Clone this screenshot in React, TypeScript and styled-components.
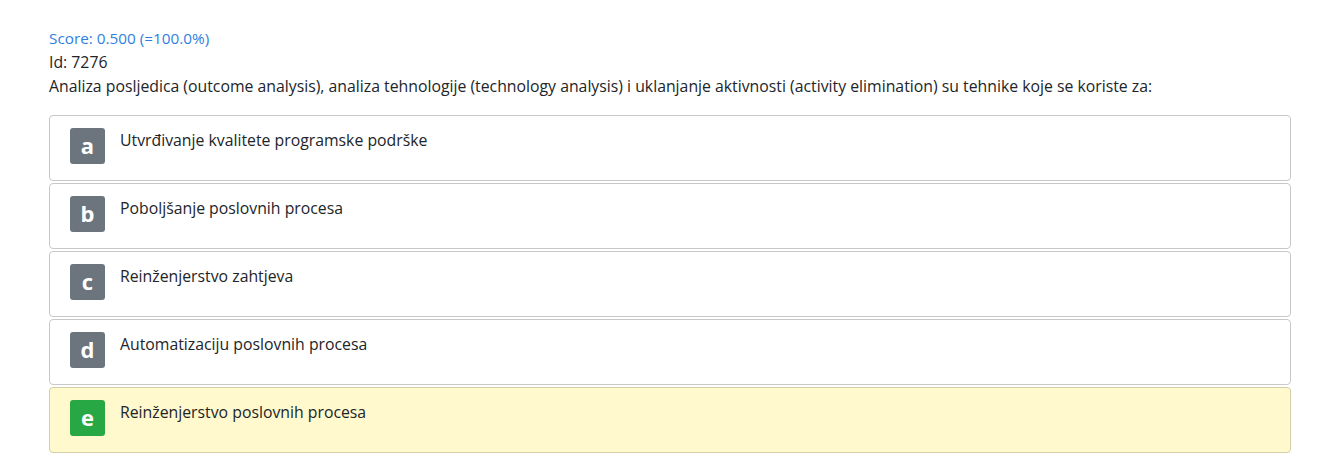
import React from 'react';
import styled, { createGlobalStyle, css } from 'styled-components';

const GlobalStyle = createGlobalStyle`
  body {
    margin: 0;
    background: #ffffff;
    font-family: 'Open Sans', 'Noto Sans', sans-serif;
    color: #212529;
  }
`;

const answers = [
  { letter: 'a', text: 'Utvrđivanje kvalitete programske podrške', correct: false },
  { letter: 'b', text: 'Poboljšanje poslovnih procesa', correct: false },
  { letter: 'c', text: 'Reinženjerstvo zahtjeva', correct: false },
  { letter: 'd', text: 'Automatizaciju poslovnih procesa', correct: false },
  { letter: 'e', text: 'Reinženjerstvo poslovnih procesa', correct: true },
];

const App = () => {
  return (
    <>
      <GlobalStyle />
      <StyledPage>
        <StyledScore>Score: 0.500 (=100.0%)</StyledScore>
        <StyledLine>Id: 7276</StyledLine>
        <StyledLine>
          Analiza posljedica (outcome analysis), analiza tehnologije (technology
          analysis) i uklanjanje aktivnosti (activity elimination) su tehnike
          koje se koriste za:
        </StyledLine>
        <StyledAnswers>
          {answers.map((answer) => (
            <StyledAnswer key={answer.letter} correct={answer.correct}>
              <StyledBadge correct={answer.correct}>{answer.letter}</StyledBadge>
              <StyledAnswerText>{answer.text}</StyledAnswerText>
            </StyledAnswer>
          ))}
        </StyledAnswers>
      </StyledPage>
    </>
  );
};

export default App;

const StyledPage = styled.div`
  padding: 26px 32px 0 49px;
  font-size: 15.8px;
  line-height: 24px;
`;

const StyledScore = styled.div`
  color: #2f7fe0;
  font-size: 15.3px;
`;

const StyledLine = styled.div`
  color: #212529;
`;

const StyledAnswers = styled.div`
  display: flex;
  flex-direction: column;
  row-gap: 2px;
  margin-top: 17px;
`;

const StyledAnswer = styled.div<{ correct: boolean }>`
  display: flex;
  align-items: flex-start;
  column-gap: 15px;
  height: 66px;
  box-sizing: border-box;
  padding: 12px 20px;
  border: 1px solid #c8c8c8;
  border-radius: 4px;
  background-color: #ffffff;

  ${({ correct }) =>
    correct &&
    css`
      background-color: #fff9cd;
      border-color: #d2cfa6;
    `}
`;

const StyledBadge = styled.div<{ correct: boolean }>`
  flex: 0 0 auto;
  width: 35px;
  height: 36px;
  border-radius: 3px;
  display: flex;
  align-items: center;
  justify-content: center;
  color: #ffffff;
  font-size: 22px;
  font-weight: 700;
  line-height: 1;
  padding-bottom: 2px;
  box-sizing: border-box;
  background-color: ${({ correct }) => (correct ? '#28a745' : '#6c757d')};
`;

const StyledAnswerText = styled.div`
  color: #212529;
`;
